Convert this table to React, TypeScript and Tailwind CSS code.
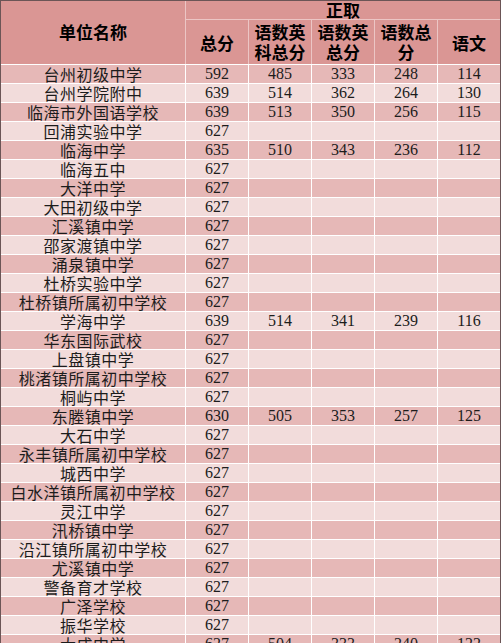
import React from 'react';

type Row = { name: string; total: string; a?: string; b?: string; c?: string; d?: string };

const rows: Row[] = [
  { name: '台州初级中学', total: '592', a: '485', b: '333', c: '248', d: '114' },
  { name: '台州学院附中', total: '639', a: '514', b: '362', c: '264', d: '130' },
  { name: '临海市外国语学校', total: '639', a: '513', b: '350', c: '256', d: '115' },
  { name: '回浦实验中学', total: '627' },
  { name: '临海中学', total: '635', a: '510', b: '343', c: '236', d: '112' },
  { name: '临海五中', total: '627' },
  { name: '大洋中学', total: '627' },
  { name: '大田初级中学', total: '627' },
  { name: '汇溪镇中学', total: '627' },
  { name: '邵家渡镇中学', total: '627' },
  { name: '涌泉镇中学', total: '627' },
  { name: '杜桥实验中学', total: '627' },
  { name: '杜桥镇所属初中学校', total: '627' },
  { name: '学海中学', total: '639', a: '514', b: '341', c: '239', d: '116' },
  { name: '华东国际武校', total: '627' },
  { name: '上盘镇中学', total: '627' },
  { name: '桃渚镇所属初中学校', total: '627' },
  { name: '桐屿中学', total: '627' },
  { name: '东塍镇中学', total: '630', a: '505', b: '353', c: '257', d: '125' },
  { name: '大石中学', total: '627' },
  { name: '永丰镇所属初中学校', total: '627' },
  { name: '城西中学', total: '627' },
  { name: '白水洋镇所属初中学校', total: '627' },
  { name: '灵江中学', total: '627' },
  { name: '汛桥镇中学', total: '627' },
  { name: '沿江镇所属初中学校', total: '627' },
  { name: '尤溪镇中学', total: '627' },
  { name: '警备育才学校', total: '627' },
  { name: '广泽学校', total: '627' },
  { name: '振华学校', total: '627' },
  { name: '大成中学', total: '627', a: '504', b: '333', c: '240', d: '122' },
];

const cjk = "font-['Noto_Sans_CJK_SC',sans-serif]";
const num = "font-['Liberation_Serif','Noto_Sans_CJK_SC',serif]";
const cols = 'grid grid-cols-[184px_62px_62px_62px_62px_1fr] gap-x-px';

export default function App() {
  return (
    <div className="w-[501px] h-[643px] overflow-hidden bg-white">
      <div className="border-l border-t border-r border-[#6b5556] bg-white">
        {/* Header */}
        <div className={`${cols} grid-rows-[18px_44px] gap-y-px bg-[#ecc6c5] text-black font-bold ${cjk}`}>
          <div className="row-span-2 bg-[#da9694] flex items-center justify-center text-[17px] pb-[2px]">
            单位名称
          </div>
          <div className="col-span-5 bg-[#da9694] flex items-center justify-center text-[17px] leading-[18px]">
            正取
          </div>
          <div className="bg-[#da9694] flex items-center justify-center text-[17px] pt-[2px]">总分</div>
          <div className="bg-[#da9694] flex items-center justify-center text-center text-[17px] leading-[20px]">
            语数英<br />科总分
          </div>
          <div className="bg-[#da9694] flex items-center justify-center text-center text-[17px] leading-[20px]">
            语数英<br />总分
          </div>
          <div className="bg-[#da9694] flex items-center justify-center text-center text-[17px] leading-[20px]">
            语数总<br />分
          </div>
          <div className="bg-[#da9694] flex items-center justify-center text-[17px] pt-[2px]">语文</div>
        </div>

        {/* Body */}
        {rows.map((r, i) => {
          const bg = i % 2 === 0 ? 'bg-[#e6b8b7]' : 'bg-[#f2dcdb]';
          const cell = `${bg} h-[18px] flex items-center justify-center text-[16px] leading-[18px] text-[#1c1c1c]`;
          return (
            <div key={i} className={`${cols} mt-px`}>
              <div className={`${cell} ${cjk} tracking-[0.5px]`}>{r.name}</div>
              <div className={`${cell} ${num}`}>{r.total}</div>
              <div className={`${cell} ${num}`}>{r.a}</div>
              <div className={`${cell} ${num}`}>{r.b}</div>
              <div className={`${cell} ${num}`}>{r.c}</div>
              <div className={`${cell} ${num}`}>{r.d}</div>
            </div>
          );
        })}
      </div>
    </div>
  );
}
